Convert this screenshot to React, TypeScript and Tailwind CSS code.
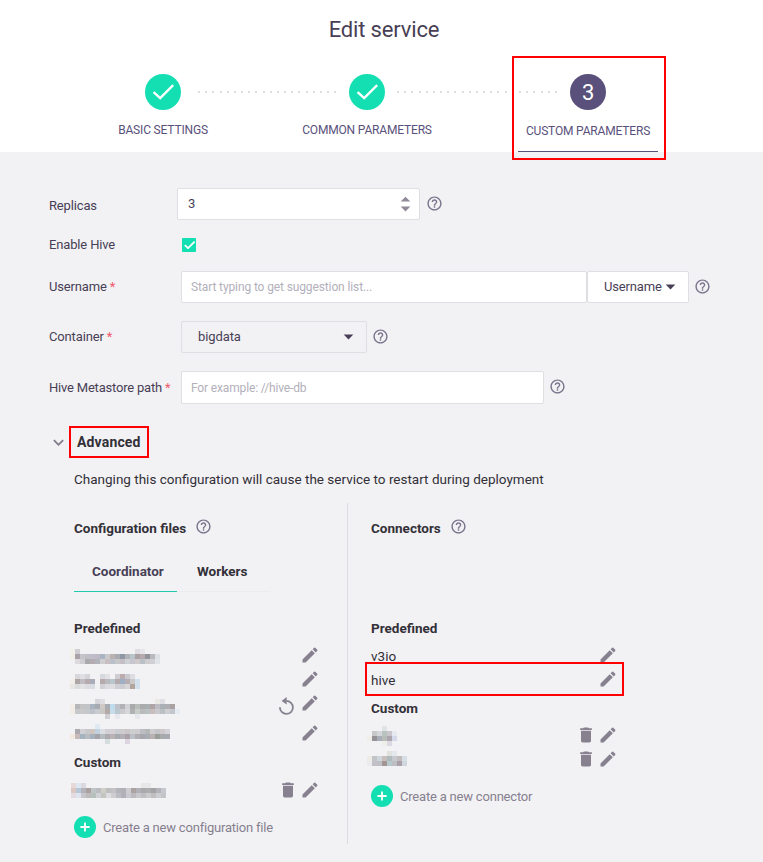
import React from "react";
import { MdDelete, MdEdit, MdHelpOutline, MdArrowDropDown, MdArrowDropUp, MdExpandMore } from "react-icons/md";

const Help = ({ className = "" }: { className?: string }) => (
  <MdHelpOutline size={17} className={"shrink-0 text-[#7a738c] " + className} />
);

const Pencil = () => <MdEdit size={20} className="-mr-[0.5px] shrink-0 text-[#86808f]" />;
const Trash = () => <MdDelete size={20} className="mr-[2px] shrink-0 text-[#86808f]" />;

const Check = ({ width, stroke }: { width: number; stroke: number }) => (
  <svg width={width} viewBox="0 0 22 16" fill="none" stroke="currentColor" strokeWidth={stroke}>
    <path d="M1.6 8.2 L8.2 14.2 L21.2 1.2" />
  </svg>
);

const Reset = () => (
  <svg width="15" height="18" viewBox="0 0 15 18" className="mt-[4px] text-[#86808f]">
    <path d="M0.9 10.3 A6.5 6.5 0 1 0 7.4 3.9" fill="none" stroke="currentColor" strokeWidth="1.8" />
    <path d="M2.6 3.9 L7.7 0.1 V7.6 Z" fill="currentColor" />
  </svg>
);

const Label = ({ children, required = false }: { children: React.ReactNode; required?: boolean }) => (
  <div className="shrink-0 whitespace-nowrap">
    {children}
    {required && <span className="text-[#f0596c]"> *</span>}
  </div>
);

// Colours of the redacted file names, one string per mosaic line; "-" is an empty cell.
const NAMES: Record<string, string[]> = {
  first: [
    "f1f0e9 cfcfd3 - - - - - - - - - - - dcdce1 e5e5ea - - -",
    "f1f0e6 a9a2a8 c6c4c8 bfc0c6 c0bdcb bdbac5 a9b4c2 c8c9cc b9b1b2 a9abb0 9099a3 b2b2b9 b9c5cb aaa1a5 b6aaae 92929b b9b9bd dde1e5",
    "- dcdadd cfcfd3 a9a9ae b5abb2 b2b2ba cfcfd1 c9bec2 bac0ca c6c7c9 c4bfc5 cdd0d4 c7c6ce cfcbcd bac0c8 d0cdd1 d0cfd5 dfe4e8",
  ],
  second: [
    "- d7d7dc e0dfe2 d5d4d9 - - d8d9de e1e1e6 - d0cdd2 bcacad c9c9cf dddde2 -",
    "f1eee8 ada4a6 bfbdc1 b7aaaf a9adb9 - b7aaac bbbabf bac6cd b4aaad 9eb0c3 b7aeb3 ccc9cb d2dfec",
    "e8e5e5 dcdcdf e2e1e4 dcdce1 d9dce1 - d3d1d6 dbdbe0 dddde2 cfcfd5 cdccd1 d9d6d9 b3a49e d4e1ed",
  ],
  third: [
    "- - - - - d8d5d8 dddde2 - - - - - - - - - - eae8e2 dedee4 - - -",
    "f3ede7 b7b7b9 c4c4c5 c2c4c7 a9b3bf a5abb0 d1c9c6 a9abb3 c1dbee c0c1c8 b3b2b6 d1d2d5 a9aaab b8bdbb abaaad aab0b1 afa4a5 bdbcc3 aab1b6 afaeb4 aaa1a3 -",
    "f3ede7 c6c7c8 c9c9cb c5c8ca bec2c8 c8cbd0 c8c7c6 b3a9a9 c7dce9 bac7cf cbcacc d7d7db aeb2b0 c9cdca b9babb b9c1c1 c7bdbd c9c8cc bac0c4 cfced1 c4c6cd e6ebf1",
    "- - - - - - - d0cfd5 - e7e8ed - - - e6e7ec - - - - - - - -",
  ],
  fourth: [
    "- - - - - dfe9f1 - - - - - - - - - - - - - -",
    "- adaaad d1d1d5 c6c8ca d1c5bf c0d1df dbdde2 d1d1d4 d5d0d5 cbccd1 cdcbcd cbc5c7 cdced0 ceccd0 bdbec3 b3b8b6 cecccf c4c5c9 cdc9cb d4d3d8",
    "f2e9df c8b9bb a3b3bf b8bbc0 a5b2bb a3a3a9 b4bbc1 adabb0 bab2b5 a7aaaf b2b0b5 aaa2a8 bcc1c7 afaeb1 a6a6ad a9adb3 b9b1b1 9b9d98 a8a9aa a9a9b1",
    "- - - - - - - d5dcdc - - - ddd5df - - - - - - - -",
  ],
  fifth: [
    "e6d9d8 dfe7f2 d9d9df - - - - - - - - - - - e7e7e8 e7e7e9 - - -",
    "dcc8c0 b9c8d9 b4b3bb aaa09f c1c4c6 bbbcc0 cfcfc8 bdbfbe c5c2c6 b3b4b9 b4b0b9 cdcdd1 aba3a2 b2b0b9 a9aaab afacad a4a3a6 b3b4b9 c6c6cf",
    "e2dce0 dde4ed c7c6cd bdbbbc b5bfbc d0d1d4 c4c5c1 dcdde0 d0cdd1 bcbdc5 b2b0b8 c9c9d0 bdbbbd c8c8cc bfbfc3 cacbcd c1bdc0 cccdd0 c4c5c9",
  ],
  sixth: [
    "- - - dfe3e5 - -",
    "- c7c8c9 d5d6dc b9c3c0 c9c5cd e7e9f1",
    "efeee8 969197 a9aeb8 b8bcb6 aea6af d5d9e9",
    "- - - efeee8 dcd9e5 -",
  ],
  seventh: [
    "- - - - e1e1e0 e4e7ec - -",
    "efece7 c3c4c8 cfd7dc c8bfbc aebabc c8c8cf c2bdbc d6dee6",
    "ebeaec c2c1c7 bec0c5 a29593 b8c9ce bfbec1 aaa1a8 d0d7de",
  ],
};

const Mosaic = ({ name }: { name: string }) => (
  <div className="flex flex-col">
    {NAMES[name].map((line, r) => (
      <div key={r} className="flex">
        {line.split(" ").map((c, i) => (
          <span key={i} className="size-[5px]" style={c === "-" ? undefined : { backgroundColor: "#" + c }} />
        ))}
      </div>
    ))}
  </div>
);

const Dots = ({ width }: { width: number }) => (
  <svg width={width} height="2" className="mt-[17px] shrink-0" shapeRendering="crispEdges">
    <line x1="0" y1="1" x2={width} y2="1" stroke="#dedee2" strokeWidth="2" strokeDasharray="2 5.17" />
  </svg>
);

const Step = ({ label, children, active = false }: { label: string; children: React.ReactNode; active?: boolean }) => (
  <div className="flex w-9 shrink-0 flex-col items-center tracking-[-0.17px] text-[#59517b]">
    <div
      className={
        active
          ? "flex size-9 items-center justify-center rounded-full bg-[#59517b] pt-[2px] text-[22px] text-white"
          : "flex size-9 items-center justify-center rounded-full bg-[#13dfb3] text-white"
      }
    >
      {children}
    </div>
    <div className={active ? "mt-[13px] text-xs leading-4 whitespace-nowrap" : "mt-3 text-xs leading-4 whitespace-nowrap"}>
      {label}
    </div>
  </div>
);

const Create = ({ children }: { children: React.ReactNode }) => (
  <div className="flex h-[22px] items-center gap-[7px] text-[13px] tracking-[-0.2px] text-[#86808f]">
    <span className="flex size-[22px] items-center justify-center rounded-full bg-[#13dfb3] text-white">
      <svg width="10" height="10" viewBox="0 0 10 10" stroke="currentColor" strokeWidth="1.8">
        <path d="M5 0.4 V9.6 M0.4 5 H9.6" />
      </svg>
    </span>
    <span className="pt-[2px]">{children}</span>
  </div>
);

export default function App() {
  return (
    <div className="h-[862px] w-[763px] overflow-hidden bg-[#f2f2f5] font-['Roboto',sans-serif] text-[13px] leading-4 text-[#483f56]">
      <header className="relative flex h-[152px] flex-col bg-white">
        <h1 className="mt-4 pl-[5px] text-center text-[22px] leading-7 tracking-[-0.17px]">Edit service</h1>
        <div className="mt-[30px] flex pl-[145px]">
          <Step label="BASIC SETTINGS"><Check width={22} stroke={2.4} /></Step>
          <div className="ml-[17px] w-[151px]"><Dots width={138} /></div>
          <Step label="COMMON PARAMETERS"><Check width={22} stroke={2.4} /></Step>
          <div className="ml-3 w-[122px]"><Dots width={113} /></div>
          <div className="w-[51px]"><Dots width={39} /></div>
          <Step label="CUSTOM PARAMETERS" active>3</Step>
        </div>
        <div className="mt-auto ml-[518px] h-px w-[140px] bg-[#59517b]" />
        <div className="absolute top-14 left-[512px] h-[104px] w-[154px] border-2 border-[#fe0000]" />
      </header>

      <section className="flex flex-col pt-9 pl-[49px] tracking-[-0.15px]">
        <div className="flex h-8">
          <div className="w-32 pt-[10px]"><Label>Replicas</Label></div>
          <div className="flex w-[243px] items-center justify-between rounded-[2px] border border-[#dedee3] bg-white pr-[2px] pl-[10px]">
            3
            <span className="flex flex-col text-[#8f8998]">
              <MdArrowDropUp size={23} className="-mb-[14px]" />
              <MdArrowDropDown size={23} />
            </span>
          </div>
          <Help className="mt-[6.5px] ml-[6px]" />
        </div>
        <div className="mt-[17px] flex h-4 items-center">
          <div className="w-[133px]"><Label>Enable Hive</Label></div>
          <span className="flex size-[14px] items-center justify-center rounded-[1px] bg-[#13dfb3] text-white"><Check width={11} stroke={3.6} /></span>
        </div>
        <div className="mt-[18px] flex h-8 items-center">
          <div className="w-[132px]"><Label required>Username</Label></div>
          <div className="flex h-8 w-[406px] items-center rounded-[2px] border border-[#dedee3] bg-white pl-[9px] text-xs tracking-[-0.12px] text-[#b3b0bb]">
            Start typing to get suggestion list...
          </div>
          <div className="flex h-8 w-[102px] items-center rounded-[2px] border border-[#dedee3] bg-white pl-4">
            Username
            <MdArrowDropDown size={23} className="-mt-[2px] -ml-[3px]" />
          </div>
          <Help className="mb-[2px] ml-[5px]" />
        </div>
        <div className="mt-[18px] flex h-8 items-center">
          <div className="w-[132px]"><Label required>Container</Label></div>
          <div className="flex h-8 w-[186px] items-center justify-between rounded-[2px] border border-[#dedee3] pr-[6px] pl-4 tracking-[-0.1px]">
            bigdata
            <MdArrowDropDown size={23} className="-mt-[2px]" />
          </div>
          <Help className="mb-[2px] ml-[5px]" />
        </div>
        <div className="mt-[18px] flex h-[33px] items-center">
          <div className="w-[132px] tracking-[-0.2px]"><Label required>Hive Metastore path</Label></div>
          <div className="flex h-[33px] w-[363px] items-center rounded-[2px] border border-[#dedee3] bg-white pl-[9px] text-xs text-[#b3b0bb]">
            For example: //hive-db
          </div>
          <Help className="mb-[3px] ml-[5px]" />
        </div>
        <div className="mt-[22px] flex h-8 items-center">
          <MdExpandMore size={21} className="-ml-[1.5px] shrink-0 text-[#7f7989]" />
          <div className="ml-[0.5px] flex h-8 w-20 items-center border-2 border-[#fe0000] pl-[6px] text-sm font-bold tracking-[0.16px] text-[#333037]">Advanced</div>
        </div>
        <p className="mt-[14px] h-4 pl-[25px] text-[13.5px] leading-[14px] tracking-normal text-[#333037]">
          Changing this configuration will cause the service to restart during deployment
        </p>
      </section>

      <section className="mt-[15px] flex pl-[74px] text-[13.5px] leading-[14px] text-[#333037]">
        <div className="flex h-[341px] w-[274px] flex-col border-r border-[#dcdce1]">
          <div className="mt-[18px] flex h-4 font-bold">
            Configuration files <Help className="-mt-[3px] ml-[9px]" />
          </div>
          <div className="mt-4 flex h-[39px] font-bold">
            <div className="w-[103px] border-b border-[#1fcbad] pt-[11px] pl-[18px] text-[#483f56]">Coordinator</div>
            <div className="w-[93px] border-b border-[#ececef] pt-[11px] pl-5">Workers</div>
          </div>
          <div className="mt-[29px] h-4 font-bold">Predefined</div>
          <div className="mt-2 flex h-6 items-start justify-between pr-[28px]">
            <div className="mt-1 -ml-1"><Mosaic name="first" /></div>
            <Pencil />
          </div>
          <div className="flex h-6 items-start justify-between pr-[28px]">
            <div className="mt-[5px] -ml-1"><Mosaic name="second" /></div>
            <Pencil />
          </div>
          <div className="flex h-[30px] items-start justify-between pr-[28px]">
            <div className="mt-[6px] -ml-1"><Mosaic name="third" /></div>
            <div className="flex gap-[6px]">
              <Reset />
              <Pencil />
            </div>
          </div>
          <div className="flex h-8 items-start justify-between pr-[28px]">
            <div className="mt-px -ml-1"><Mosaic name="fourth" /></div>
            <Pencil />
          </div>
          <div className="h-4 font-bold">Custom</div>
          <div className="mt-[9px] flex h-5 items-start justify-between pr-[28px]">
            <div className="mt-[3px] -ml-[3px]"><Mosaic name="fifth" /></div>
            <div className="flex"><Trash /><Pencil /></div>
          </div>
          <div className="mt-4"><Create>Create a new configuration file</Create></div>
        </div>

        <div className="flex flex-col pl-[23px]">
          <div className="mt-[18px] flex h-4 font-bold">
            Connectors <Help className="-mt-[3px] ml-[9px]" />
          </div>
          <div className="mt-[84px] h-4 font-bold">Predefined</div>
          <div className="mt-2 flex h-6 w-[246px] items-start justify-between">
            <span className="pt-1">v3io</span>
            <Pencil />
          </div>
          <div className="relative flex h-6 w-[246px] items-start justify-between">
            <span className="pt-1">hive</span>
            <Pencil />
            <div className="absolute -top-[7px] -left-[6px] h-[34px] w-[259px] border-2 border-[#fe0000]" />
          </div>
          <div className="mt-2 h-4 font-bold">Custom</div>
          <div className="mt-2 flex h-6 w-[246px] items-start justify-between">
            <div className="mt-px -ml-1"><Mosaic name="sixth" /></div>
            <div className="flex"><Trash /><Pencil /></div>
          </div>
          <div className="flex h-6 w-[246px] items-start justify-between">
            <div className="mt-[2px] -ml-1"><Mosaic name="seventh" /></div>
            <div className="flex"><Trash /><Pencil /></div>
          </div>
          <div className="mt-3"><Create>Create a new connector</Create></div>
        </div>
      </section>
    </div>
  );
}
